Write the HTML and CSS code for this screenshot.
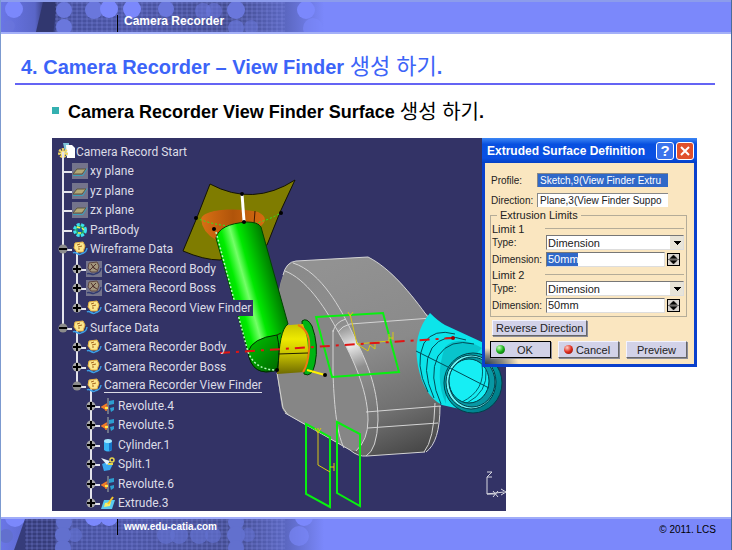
FILE: index.html
```html
<!DOCTYPE html>
<html lang="ko">
<head>
  <meta charset="UTF-8" />
  <title>Camera Recorder</title>
  <link rel="stylesheet" href="styles.css">
</head>
<body>
  <!-- Icon set for the tree -->
  <svg class="symbols" aria-hidden="true">
    <defs>
      <symbol id="i-plane" viewBox="0 0 16 16">
        <rect width="16" height="16" fill="#74748c" />
        <path d="M5 6h9l-4 5H1z" fill="#b3a878" stroke="#5c5640" />
        <path d="M1 12.500h10l4-7" fill="none" stroke="#3ba0b8" />
      </symbol>
      <symbol id="i-body" viewBox="0 0 16 16">
        <circle cx="8" cy="8" r="5.5" fill="#2ba35b" stroke="#3ce0ee" stroke-width="3" stroke-dasharray="3 1.4" />
        <circle cx="8" cy="8" r="2.5" fill="#125aa8" />
        <path d="M5 5l3 1M10 6l2 2M6 11l3 0" stroke="#f4ee5a" stroke-width="1.5" />
      </symbol>
      <symbol id="i-set" viewBox="0 0 16 16">
        <path d="M3 2l8-1 2 4-2 6H5L2 7z" fill="#fbe68c" stroke="#e6b244" />
        <path d="M5 4l3-1M6 6l4-1M6 8l2 0" stroke="#a5641e" />
        <path d="M1 12c3-2 5 3 8 1s5 0 6-6" fill="none" stroke="#3d9fe6" stroke-width="1.5" />
      </symbol>
      <symbol id="i-hidden" viewBox="0 0 16 16">
        <rect width="16" height="16" fill="#74748c" />
        <path d="M3 2l8-1 2 4-2 6H5L2 7z" fill="#a2957c" stroke="#5f4640" />
        <path d="M5 3l4 5M10 3L4 9M6 6l5 3" stroke="#50302c" />
        <path d="M1 13c3-2 5 2 8 0s5 0 6-6" fill="none" stroke="#303a70" stroke-width="1.5" />
      </symbol>
      <symbol id="i-revolute" viewBox="0 0 16 16">
        <path d="M8 0v16" stroke="#6e7488" stroke-width="2" />
        <path d="M9 3l5-1v4l-5 1zM10 10l4-1v3l-3 2z" fill="#2d9ed0" />
        <path d="M7 6L2 9l5 3M3 9h5M6 7v6" fill="none" stroke="#f07c28" stroke-width="1.5" />
        <path d="M5 10h3" stroke="#ffe84a" stroke-width="2" />
      </symbol>
      <symbol id="i-cylinder" viewBox="0 0 16 16">
        <path d="M4 4v9q4 3 8 0V4z" fill="#36b4f4" />
        <path d="M9 4h3v9l-3 1z" fill="#1675c8" />
        <ellipse cx="8" cy="4" rx="4" ry="2" fill="#a5e8ff" />
      </symbol>
      <symbol id="i-split" viewBox="0 0 16 16">
        <path d="M2 8l5-2 6 2-3 6-6 1z" fill="#3aa9f0" />
        <path d="M1 2l9 3-3 4z" fill="#e8f4f8" />
        <circle cx="12" cy="4" r="2" fill="none" stroke="#e8d64c" stroke-width="1.5" />
        <path d="M8 8l5 0" stroke="#e8d64c" stroke-width="2" />
      </symbol>
      <symbol id="i-extrude" viewBox="0 0 16 16">
        <path d="M4 5h11l-3 9H1z" fill="#58c8f0" />
        <path d="M5 8l6-1-1 4-6 1z" fill="#f6ef68" />
        <path d="M8 9l5-7" stroke="#f4c42e" stroke-width="2" />
      </symbol>
      <symbol id="t-plus" viewBox="0 0 10 10">
        <circle cx="5" cy="5" r="4.5" fill="#a8a8a8" />
        <path d="M5 1v8M1 5h8" stroke="#000" stroke-width="2" />
      </symbol>
      <symbol id="t-minus" viewBox="0 0 10 10">
        <circle cx="5" cy="5" r="4.5" fill="#8c8c8c" />
        <path d="M1 5h8" stroke="#000" stroke-width="2" />
      </symbol>
      <linearGradient id="band">
        <stop offset="0" stop-color="#6a76e6" />
        <stop offset=".1" stop-color="#5a66c8" />
        <stop offset=".13" stop-color="#343a76" />
        <stop offset=".18" stop-color="#454f9c" />
        <stop offset=".38" stop-color="#4c56a6" />
        <stop offset=".68" stop-color="#434c90" />
        <stop offset=".84" stop-color="#5c68c2" />
        <stop offset=".95" stop-color="#7b88fb" />
      </linearGradient>
      <pattern id="grid" width="5" height="4" patternUnits="userSpaceOnUse">
        <path d="M0 1h5M1 0v4" stroke="#8792ec" stroke-opacity=".35" />
      </pattern>
    </defs>
  </svg>

  <header class="band band-top">
    <svg class="band-art" viewBox="0 0 340 34" aria-hidden="true">
      <rect width="340" height="34" fill="url(#band)" />
      <path d="M42 0h14l-4 34H34z" fill="#31376f" />
      <rect x="54" width="230" height="34" fill="url(#grid)" />
      <g fill="#6a77dc">
        <circle cx="63" cy="8" r="8" /><circle cx="63" cy="25" r="8" />
        <circle cx="93" cy="8" r="9" /><circle cx="165" cy="7" r="8" />
        <circle cx="202" cy="9" r="8" opacity=".6" /><circle cx="213" cy="9" r="8" opacity=".6" />
        <circle cx="235" cy="8" r="9" /><circle cx="235" cy="26" r="8" opacity=".7" />
        <circle cx="250" cy="25" r="7" opacity=".5" /><circle cx="8" cy="24" r="6" opacity=".6" />
      </g>
      <g fill="#7b88fc">
        <circle cx="13" cy="7" r="9" /><circle cx="108" cy="7" r="9" />
        <circle cx="131" cy="7" r="9" /><circle cx="305" cy="8" r="9" />
        <circle cx="312" cy="26" r="10" opacity=".6" />
      </g>
    </svg>
    <span class="band-title">Camera Recorder</span>
  </header>

  <main>
    <h1>4. Camera Recorder – View Finder <span class="ko">생성 하기</span>.</h1>
    <h2>Camera Recorder View Finder Surface <span class="ko">생성 하기</span>.</h2>

    <div class="stage">
      <div class="viewer">
        <!-- 3D model -->
        <svg class="scene" viewBox="52 138 454 373" aria-hidden="true">
          <defs>
            <linearGradient id="tube" gradientUnits="userSpaceOnUse" x1="226" y1="292" x2="276" y2="278">
              <stop offset="0" stop-color="#00c800" /><stop offset=".22" stop-color="#00ee00" />
              <stop offset=".4" stop-color="#74ff68" /><stop offset=".55" stop-color="#00e800" />
              <stop offset="1" stop-color="#007800" />
            </linearGradient>
            <linearGradient id="elbow" x1="0" y1="0" x2=".8" y2="1">
              <stop offset="0" stop-color="#00c400" /><stop offset="1" stop-color="#007000" />
            </linearGradient>
            <linearGradient id="gold" x1="0" y1="0" x2="0" y2="1">
              <stop offset="0" stop-color="#c8c400" /><stop offset=".3" stop-color="#eeea00" />
              <stop offset=".6" stop-color="#c8c200" /><stop offset="1" stop-color="#6e6a00" />
            </linearGradient>
            <linearGradient id="bowl">
              <stop offset="0" stop-color="#d87014" /><stop offset=".5" stop-color="#b0540a" />
              <stop offset="1" stop-color="#d66c10" />
            </linearGradient>
            <linearGradient id="shell" gradientUnits="userSpaceOnUse" x1="340" y1="260" x2="420" y2="456">
              <stop offset="0" stop-color="#929292" /><stop offset=".45" stop-color="#8a8a8a" />
              <stop offset=".75" stop-color="#707070" /><stop offset="1" stop-color="#444" />
            </linearGradient>
            <linearGradient id="rim" gradientUnits="userSpaceOnUse" x1="300" y1="262" x2="372" y2="455">
              <stop offset="0" stop-color="#8a8a8a" /><stop offset=".36" stop-color="#8e8e8e" />
              <stop offset=".47" stop-color="#e8e8e8" /><stop offset=".58" stop-color="#8e8e8e" />
              <stop offset="1" stop-color="#666" />
            </linearGradient>
            <linearGradient id="ring" x1="0" y1="0" x2="1" y2="1">
              <stop offset="0" stop-color="#00c4cc" /><stop offset="1" stop-color="#00707c" />
            </linearGradient>
          </defs>

          <!-- camera body -->
          <path d="M283 275Q286 262 296 261L368 257C390 268 410 292 425 313Q440 322 440 345V407Q440 440 425 452L367 456Q357 456 350 450L288 415Q282 412 281 402L277 373V315Q277 290 283 275Z" fill="url(#shell)" />
          <path d="M285 271C306 279 324 306 336 328C350 352 368 388 368 420Q368 440 356 451L350 450L288 415Q282 412 281 402L277 373V315Q277 290 285 271Z" fill="#868686" />
          <path d="M285 271Q288 264 293 263C322 272 342 312 350 328C364 356 378 384 378 420Q377 450 366 456Q360 456 356 451Q368 440 368 420C368 388 350 352 336 328C324 306 306 279 285 271Z" fill="url(#rim)" />
          <g fill="none" stroke="#d4d4d4">
            <path d="M283 275Q286 262 296 261L368 257C390 268 410 292 430 320" />
            <path d="M285 271C306 279 324 306 336 328C350 352 368 388 368 420Q368 440 356 451" />
            <path d="M293 263C322 272 342 312 350 328C364 356 378 384 378 420Q377 450 366 456" />
            <path d="M333 330V373C334 400 336 432 344 448M333 332Q335 322 346 319M338 332Q342 326 350 324L432 318" />
            <path d="M366 412L441 406M368 428L438 423" />
            <path d="M435 403Q434 440 424 452M440 406Q440 442 426 452M285 413L350 450Q358 457 367 456L425 452M277 373L283 408L288 415" />
          </g>

          <!-- lens -->
          <path d="M430 313Q438 321 445 325L484 343L500 378L473 412L442 405Q424 396 418 366Q412 334 430 313Z" fill="#0ce4ea" />
          <path d="M445 347Q458 334 482 348L472 358Q452 352 446 374V404Q434 378 445 347Z" fill="#08c4cc" />
          <g fill="none" stroke="#004c58">
            <path d="M428 392Q414 364 424 343Q434 328 455 334M434 398Q420 368 432 348Q444 332 466 340M441 404Q428 376 438 356Q450 338 474 344" />
            <path d="M416 351L450 368" />
          </g>
          <ellipse cx="473" cy="383" rx="29" ry="30" fill="url(#ring)" stroke="#00404a" />
          <ellipse cx="471" cy="382" rx="25" ry="27" fill="#6ef4f6" stroke="#003c46" />
          <ellipse cx="472" cy="382" rx="23" ry="25" fill="#0898a4" stroke="#003c46" />
          <ellipse cx="469" cy="381" rx="20" ry="22" fill="#16eef4" stroke="#003c46" />
          <path d="M482 365Q486 390 462 402M486 370Q488 392 467 403" fill="none" stroke="#00606c" />
          <path d="M450 368L489 388" stroke="#004c58" />

          <!-- sweep surface and bowl -->
          <path d="M210 184Q253 207 295 180Q279 212 267 245L220 260Q204 260 183 251Q198 216 210 184Z" fill="#7f7c00" stroke="#141400" />
          <path d="M201 219C204 208 240 208 258 212Q270 218 261 226L216 240Q202 232 201 219Z" fill="url(#bowl)" />
          <path d="M255 211l-1 13" stroke="#401800" />
          <path d="M196 218Q240 236 281 213" fill="none" stroke="#22f022" stroke-dasharray="2 2" />
          <path d="M242 194l2 27" stroke="#fff" stroke-width="3" />

          <!-- tube, elbow and collar -->
          <path d="M302 321Q307 317 312 326Q319 345 315 364Q312 378 304 374Z" fill="#00b414" stroke="#003800" />
          <path d="M277 336Q283 324 290 325L303 324Q312 348 305 372L277 374Z" fill="url(#gold)" />
          <path d="M298 325Q311 331 309 350Q308 365 303 372" fill="none" stroke="#f07810" stroke-width="2" />
          <path d="M216 238Q219 224 247 222Q258 222 261 227L288 324Q279 330 278 370Q252 378 248 352Z" fill="url(#tube)" stroke="#004400" />
          <path d="M248 352Q252 338 277 335Q281 350 277 370Q252 378 248 352Z" fill="url(#elbow)" stroke="#002800" />
          <path d="M278 354L308 353M277 335L281 333" stroke="#222000" />
          <path d="M216 232L248 352Q255 370 277 370" fill="none" stroke="#b8ffc0" stroke-width="1.5" stroke-dasharray="2 2" />
          <path d="M307 370l18 5" stroke="#fff200" stroke-width="2" />
          <g fill="#000">
            <circle cx="242" cy="194" r="2" /><circle cx="244" cy="222" r="2" />
            <circle cx="214" cy="229" r="2" /><circle cx="196" cy="218" r="2" />
            <circle cx="281" cy="213" r="2" /><circle cx="325" cy="375" r="2" />
            <circle cx="277" cy="370" r="2" />
          </g>

          <!-- sketches and axes -->
          <g fill="none" stroke="#08f010" stroke-width="2">
            <path d="M316 317L383 313L399 372L332 377Z" />
            <path d="M306 424L330 437V507L306 494Z" />
            <path d="M337 422L360 434V506L337 493Z" />
          </g>
          <g fill="none" stroke="#d8c814">
            <path d="M350 314L357 344L389 341M357 344L368 351L370 345L375 349V344M389 334V342M393 332V340M389 338h4M348 312l2 4 3-4" />
            <path d="M318 428V465L330 472M315 428l3 5 3-5M330 467h4M334 463v8" />
          </g>
          <path d="M220 353L453 338" stroke="#e01414" stroke-width="2" stroke-dasharray="10 6 3 6" />
          <circle cx="453" cy="338" r="2" fill="#900" />
          <g fill="none" stroke="#d8d8e0">
            <path d="M487 477V494L504 492M487 494h8M493 491l5 6M498 491l-5 6M501 489l5 3-5 3" />
            <path d="M487 472h5l-5 5h5" />
          </g>
        </svg>

        <!-- Specification tree -->
        <ul class="tree">
          <li class="root">
            <svg class="root-icon" viewBox="0 0 18 18" aria-hidden="true">
              <path d="M5 0h6v4h4v9H8z" fill="#7ec4d8" />
              <path d="M8 2h6l3 3v10H9z" fill="#fff" />
              <circle cx="5" cy="10" r="3.5" fill="none" stroke="#f4d860" stroke-width="3" stroke-dasharray="2 1" />
              <circle cx="5" cy="10" r="2.5" fill="#f8e48c" />
              <circle cx="5" cy="10" r="1" fill="#333366" />
            </svg>Camera Record Start
          </li>
          <li class="l1"><svg class="ico"><use href="#i-plane" /></svg>xy plane</li>
          <li class="l1"><svg class="ico"><use href="#i-plane" /></svg>yz plane</li>
          <li class="l1"><svg class="ico"><use href="#i-plane" /></svg>zx plane</li>
          <li class="l1"><svg class="ico"><use href="#i-body" /></svg>PartBody</li>
          <li class="l1 through"><svg class="toggle"><use href="#t-minus" /></svg><svg class="ico"><use href="#i-set" /></svg>Wireframe Data</li>
          <li class="l2 through"><svg class="toggle"><use href="#t-plus" /></svg><svg class="ico"><use href="#i-hidden" /></svg>Camera Record Body</li>
          <li class="l2 through"><svg class="toggle"><use href="#t-plus" /></svg><svg class="ico"><use href="#i-hidden" /></svg>Camera Record Boss</li>
          <li class="l2 through"><svg class="toggle"><use href="#t-plus" /></svg><svg class="ico"><use href="#i-set" /></svg><span class="plate">Camera Record View Finder</span></li>
          <li class="l1"><svg class="toggle"><use href="#t-minus" /></svg><svg class="ico"><use href="#i-set" /></svg>Surface Data</li>
          <li class="l2"><svg class="toggle"><use href="#t-plus" /></svg><svg class="ico"><use href="#i-set" /></svg>Camera Recorder Body</li>
          <li class="l2"><svg class="toggle"><use href="#t-plus" /></svg><svg class="ico"><use href="#i-set" /></svg>Camera Recorder Boss</li>
          <li class="l2"><svg class="toggle"><use href="#t-minus" /></svg><svg class="ico"><use href="#i-set" /></svg><span class="current">Camera Recorder View Finder</span></li>
          <li class="l3"><svg class="toggle"><use href="#t-plus" /></svg><svg class="ico"><use href="#i-revolute" /></svg>Revolute.4</li>
          <li class="l3"><svg class="toggle"><use href="#t-plus" /></svg><svg class="ico"><use href="#i-revolute" /></svg>Revolute.5</li>
          <li class="l3"><svg class="toggle"><use href="#t-plus" /></svg><svg class="ico"><use href="#i-cylinder" /></svg>Cylinder.1</li>
          <li class="l3"><svg class="toggle"><use href="#t-plus" /></svg><svg class="ico"><use href="#i-split" /></svg>Split.1</li>
          <li class="l3"><svg class="toggle"><use href="#t-plus" /></svg><svg class="ico"><use href="#i-revolute" /></svg>Revolute.6</li>
          <li class="l3"><svg class="toggle"><use href="#t-plus" /></svg><svg class="ico"><use href="#i-extrude" /></svg>Extrude.3</li>
        </ul>
      </div>

      <!-- Dialog window over the viewer -->
      <form class="dialog">
        <div class="dialog-bar">
          <span class="dialog-title">Extruded Surface Definition</span>
          <button type="button" class="win-btn" aria-label="Help">?</button>
          <button type="button" class="win-btn close" aria-label="Close">
            <svg viewBox="0 0 16 16"><path d="M4 4l8 8M12 4l-8 8" stroke="#fff" stroke-width="2" /></svg>
          </button>
        </div>
        <div class="dialog-body">
          <div class="field">
            <label for="profile">Profile:</label>
            <input id="profile" class="picked" type="text" value="Sketch,9(View Finder Extru" />
          </div>
          <div class="field">
            <label for="direction">Direction:</label>
            <input id="direction" type="text" value="Plane,3(View Finder Suppo" />
          </div>

          <fieldset>
            <legend>Extrusion Limits</legend>
            <div class="limit">Limit 1</div>
            <div class="row">
              <label for="type1">Type:</label>
              <select id="type1"><option>Dimension</option></select>
            </div>
            <div class="row dim">
              <label for="dim1">Dimension:</label>
              <input id="dim1" class="marked" type="text" value="50mm" />
              <button type="button" class="spin" aria-label="Change limit 1"><svg viewBox="0 0 12 12"><path d="M0 6h12M6 1l4 4H2zM6 11l4-4H2z" stroke="#000" stroke-width=".5" /></svg></button>
            </div>
            <div class="limit">Limit 2</div>
            <div class="row">
              <label for="type2">Type:</label>
              <select id="type2"><option>Dimension</option></select>
            </div>
            <div class="row dim">
              <label for="dim2">Dimension:</label>
              <input id="dim2" type="text" value="50mm" />
              <button type="button" class="spin" aria-label="Change limit 2"><svg viewBox="0 0 12 12"><path d="M0 6h12M6 1l4 4H2zM6 11l4-4H2z" stroke="#000" stroke-width=".5" /></svg></button>
            </div>
          </fieldset>

          <button type="button" class="btn reverse">Reverse Direction</button>
          <div class="actions">
            <button type="button" class="btn default"><i class="led green"></i><span>OK</span></button>
            <button type="button" class="btn"><i class="led red"></i><span>Cancel</span></button>
            <button type="button" class="btn"><span>Preview</span></button>
          </div>
        </div>
      </form>
    </div>
  </main>

  <footer class="band band-bottom">
    <svg class="band-art" viewBox="0 0 340 34" aria-hidden="true">
      <rect width="340" height="34" fill="url(#band)" />
      <path d="M24 0h30v34H12z" fill="#363c7a" />
      <rect x="24" width="260" height="34" fill="url(#grid)" />
      <g fill="#6270ce">
        <circle cx="63" cy="3" r="8" /><circle cx="62" cy="16" r="8" /><circle cx="74" cy="16" r="7" opacity=".7" />
        <circle cx="62" cy="29" r="8" /><circle cx="165" cy="16" r="9" opacity=".7" />
        <circle cx="178" cy="16" r="9" opacity=".7" /><circle cx="198" cy="16" r="9" opacity=".7" />
        <circle cx="212" cy="16" r="8" opacity=".7" /><circle cx="235" cy="3" r="8" />
        <circle cx="235" cy="16" r="9" /><circle cx="247" cy="16" r="7" opacity=".6" />
        <circle cx="235" cy="29" r="8" /><circle cx="5" cy="17" r="7" />
      </g>
      <g fill="#7b88fc">
        <circle cx="14" cy="-2" r="10" /><circle cx="93" cy="-2" r="9" />
        <circle cx="108" cy="-2" r="9" /><circle cx="303" cy="-2" r="9" />
        <circle cx="298" cy="17" r="10" opacity=".6" />
      </g>
    </svg>
    <a class="band-title" href="#">www.edu-catia.com</a>
    <small>© 2011. LCS</small>
  </footer>
</body>
</html>
```
FILE: styles.css
```css
* {
  box-sizing: border-box;
}

body {
  margin: 0;
  min-height: 100vh;
  display: flex;
  flex-direction: column;
  background-color: #fff;
  font-family: "Liberation Sans", "Noto Sans CJK KR", sans-serif;
  border-left: 1px solid #7c9ad0;
  border-right: 1px solid #4a6a9c;
}

.symbols {
  position: absolute;
  width: 0;
  height: 0;
}

/********************************************************
 * Top and bottom bands
 ********************************************************/
.band {
  position: relative;
  display: flex;
  background-color: #7b88fb;
  overflow: hidden;
}
.band-top {
  height: 34px;
  padding-top: 13px;
  border-top: 2px solid #8c9cec;
  border-bottom: 2px solid #a4b0f8;
}
.band-bottom {
  height: 33px;
  border-top: 2px solid #a0acf8;
}
.band-art {
  position: absolute;
  left: 0;
  top: 0;
  width: 340px;
  height: 34px;
}
.band-title {
  position: relative;
  margin-left: 116px;
  padding-left: 6px;
  border-left: 1px solid #000;
  color: #fff;
  font-size: 12px;
  font-weight: bold;
  line-height: 12px;
  text-decoration: none;
}
.band-bottom .band-title {
  font-size: 10px;
  line-height: 15px;
  height: 16px;
}
.band-bottom small {
  margin-left: auto;
  padding: 5px 15px 0 0;
  font-size: 10px;
  line-height: 12px;
}

/********************************************************
 * Headings
 ********************************************************/
main {
  flex: 1;
  display: flex;
  flex-direction: column;
  padding-bottom: 6px;
}

h1 {
  margin: 0 16px 0 14px;
  padding: 20px 0 3px 6px;
  border-bottom: 2px solid #6464f4;
  color: #3c64f8;
  font-size: 20px;
  line-height: 26px;
}
h1 .ko {
  font-size: 22px;
  line-height: 20px;
}

h2 {
  display: flex;
  align-items: center;
  margin: 0;
  padding: 15px 0 14px 51px;
  color: #000;
  font-size: 18px;
  line-height: 24px;
  white-space: pre;
}
h2::before {
  content: "";
  width: 7px;
  height: 7px;
  margin: 0 9px 4px 0;
  background-color: #34b0b0;
}
h2 .ko {
  font-size: 20px;
}

.ko {
  font-weight: normal;
}

/********************************************************
 * 3D viewer
 ********************************************************/
.stage {
  position: relative;
  flex: 1;
  display: flex;
  margin-left: 51px;
}

.viewer {
  position: relative;
  display: flex;
  width: 454px;
  background-color: #333366;
  overflow: hidden;
}

.scene {
  position: absolute;
  left: 0;
  top: 0;
  width: 454px;
}

.tree {
  position: relative;
  display: flex;
  flex-direction: column;
  margin: 4px 0 -2px;
  padding: 0;
  list-style: none;
  color: #dcdce6;
  font-family: Roboto, sans-serif;
  font-size: 12px;
}
.tree li {
  position: relative;
  flex: 1;
  display: flex;
  align-items: center;
  line-height: 16px;
  white-space: nowrap;
}

/* vertical connector, reaches up to the row before */
.tree li::before {
  content: "";
  position: absolute;
  top: -50%;
  left: 10px;
  width: 2px;
  height: 100%;
  background-color: #e4e4ec;
}
.tree li.root::before {
  display: none;
}
.tree li.l2::before {
  left: 24px;
}
.tree li.l3::before {
  left: 38px;
}

/* short stub to the icon */
.tree li::after {
  content: "";
  position: absolute;
  top: 50%;
  left: 11px;
  width: 9px;
  height: 2px;
  background-color: #e4e4ec;
}
.tree li.root::after {
  display: none;
}
.tree li.l2::after {
  left: 25px;
}
.tree li.l3::after {
  left: 39px;
}

/* trunk that goes on beside the nested rows */
.tree li.through {
  background: linear-gradient(#e4e4ec, #e4e4ec) 10px 0 / 2px 100% no-repeat;
}

.root {
  padding-left: 6px;
}
.l1 {
  padding-left: 20px;
}
.l2 {
  padding-left: 34px;
}
.l3 {
  padding-left: 48px;
}

.root-icon {
  width: 18px;
  height: 18px;
}
.ico {
  width: 16px;
  height: 16px;
  margin-right: 2px;
  z-index: 1;
}
.toggle {
  width: 10px;
  height: 10px;
  margin: 0 4px 0 -14px;
  z-index: 1;
}
.plate {
  padding-right: 2px;
  background-color: #333366;
}
.current {
  border-bottom: 1px solid #dcdce6;
  line-height: 13px;
}

/********************************************************
 * Dialog
 ********************************************************/
.dialog {
  position: absolute;
  top: 0;
  left: 430px;
  width: 215px;
  border: 3px solid #0a40cc;
  border-top: 0;
  background-color: #fae6c0;
  color: #222;
  font-size: 11px;
}
.dialog input,
.dialog select,
.dialog button {
  font-family: inherit;
  font-size: 11px;
  border-radius: 0;
}
.dialog label,
.dialog .field input {
  font-size: 10px;
}

.dialog-bar {
  display: flex;
  align-items: center;
  gap: 2px;
  height: 25px;
  margin: 0 -3px;
  padding: 0 3px 0 5px;
  background: linear-gradient(#3c86f4, #0850e0 25%, #0a50e4 80%, #0440c4);
}
.dialog-title {
  flex: 1;
  color: #fff;
  font-size: 12px;
  font-weight: bold;
  white-space: nowrap;
}
.dialog .win-btn {
  width: 18px;
  height: 18px;
  padding: 0;
  border: 1px solid #fff;
  border-radius: 3px;
  background-color: #3c74ec;
  color: #fff;
  font-size: 15px;
  font-weight: bold;
  line-height: 16px;
}
.dialog .close {
  background-color: #e0502c;
}
.win-btn svg {
  display: block;
}

.dialog-body {
  padding: 7px 7px 6px 5px;
  background: radial-gradient(ellipse 34px 16px at 0 100%, #2c3c50, #8c8c84 55%, transparent);
}

.field {
  display: flex;
  align-items: center;
  height: 20px;
  padding: 0 19px 0 1px;
}
.field label {
  width: 46px;
}
.field input {
  flex: 1;
  min-width: 0;
  height: 14px;
  padding: 0 0 0 2px;
  border: 0;
  border-top: 1px solid #888;
  border-left: 1px solid #888;
  background-color: #fff;
  color: #222;
}
.field .picked {
  background-color: #3068c8;
  color: #fff;
}

fieldset {
  min-width: 0;
  margin: -1px 0 3px;
  padding: 0 2px 2px 1px;
  border: 1px solid #b4ac98;
}
legend {
  margin-left: 5px;
  padding: 0 3px;
  line-height: 13px;
}
.limit {
  display: flex;
  align-items: center;
  height: 13px;
}
.limit::after {
  content: "";
  flex: 1;
  margin-left: 21px;
  border-top: 1px solid #b4ac98;
}
.row {
  display: flex;
  align-items: center;
  height: 15px;
}
.row label {
  width: 54px;
}
.row select,
.row input {
  flex: 1;
  min-width: 0;
  height: 15px;
  padding: 0 1px;
  border: 1px solid #777;
  border-right-color: #ddd;
  border-bottom-color: #ddd;
  background-color: #fff;
  color: #222;
}
.row select {
  appearance: none;
  background: linear-gradient(#000, #000) 127px 5px / 7px 1px no-repeat,
    linear-gradient(#000, #000) 128px 6px / 5px 1px no-repeat,
    linear-gradient(#000, #000) 129px 7px / 3px 1px no-repeat,
    linear-gradient(#000, #000) 130px 8px / 1px 1px no-repeat,
    linear-gradient(#e8e4d8, #e8e4d8) 100% 0 / 13px 100% no-repeat #fff;
}
.dim {
  height: 18px;
  padding-right: 4px;
}
.dim .marked {
  background: linear-gradient(#3068c8, #3068c8) 0 0 / 31px 100% no-repeat #fff;
  color: #fff;
}
.spin {
  width: 13px;
  height: 13px;
  margin-left: 2px;
  padding: 0;
  border: 1px solid #000;
  background-color: #d8d4d0;
}
.spin svg {
  display: block;
}

.btn {
  display: flex;
  align-items: center;
  height: 17px;
  padding: 0 5px;
  border: 1px solid;
  border-color: #f4f4ff #666 #666 #f4f4ff;
  background-color: #d2d2e8;
  box-shadow: 1px 1px 0 #8c8c98;
  color: #222;
}
.btn span {
  flex: 1;
  text-align: center;
}
.reverse {
  height: 16px;
  margin-left: 2px;
  padding: 0 3px;
}
.actions {
  display: flex;
  gap: 7px;
  margin-top: 5px;
}
.actions .btn {
  flex: 1;
}
.actions .default {
  border: 1px solid #000;
}
.led {
  width: 9px;
  height: 9px;
  border-radius: 50%;
}
.green {
  background: radial-gradient(circle at 35% 30%, #c8ffc0, #18b018 50%, #064c06);
}
.red {
  background: radial-gradient(circle at 35% 30%, #ffd0c8, #e02c1c 50%, #701008);
}
```
